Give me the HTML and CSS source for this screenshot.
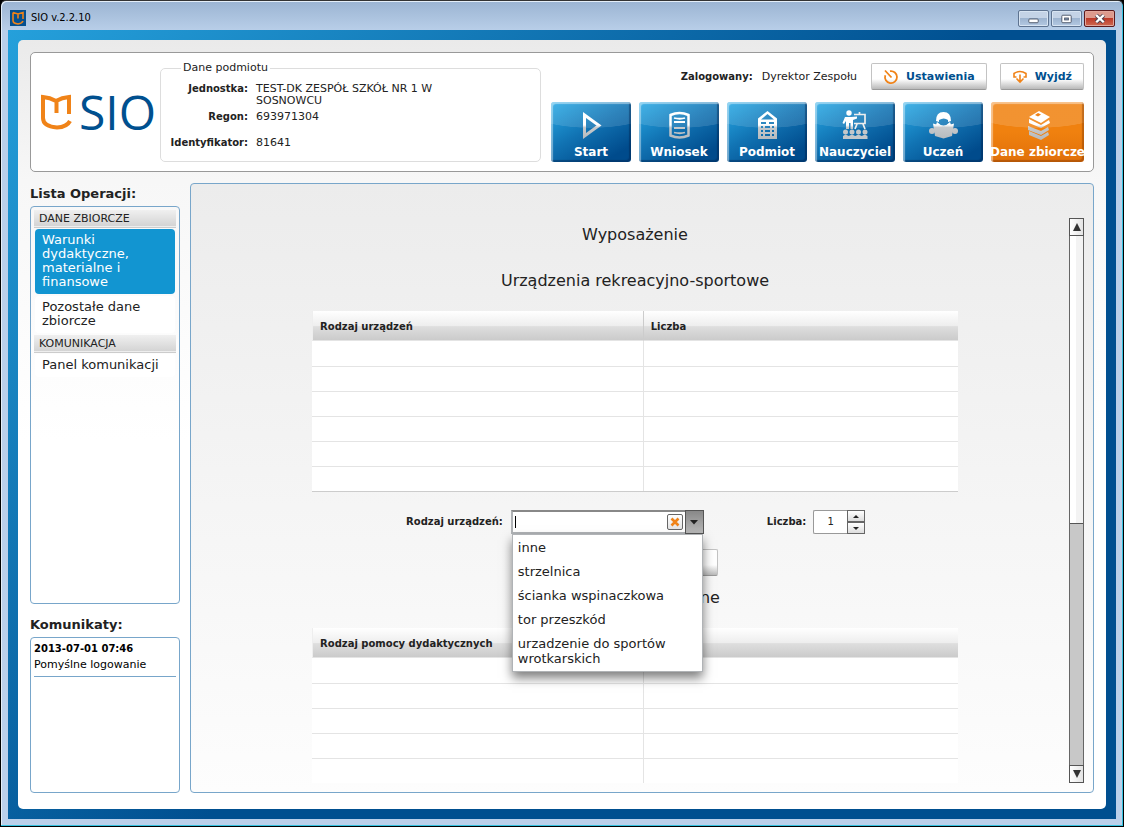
FILE: index.html
```html
<!DOCTYPE html>
<html lang="pl">
<head>
<meta charset="utf-8">
<title>SIO v.2.2.10</title>
<link rel="stylesheet" href="styles.css">
</head>
<body>
<div class="window">
  <header class="titlebar">
    <svg class="app-icon" viewBox="0 0 16 16" aria-hidden="true"><rect width="16" height="16" fill="#05508f"/><path d="M3 2.500v8q0 3 5 3.500 4-.5 5-3M3 2.500l5 1.500 5-1.500v6.500M8 4v4.500" fill="none" stroke="#f08318" stroke-width="1.600"/></svg>
    <span class="app-title">SIO v.2.2.10</span>
    <div class="window-controls">
      <button class="win-btn" aria-label="Minimalizuj"><svg viewBox="0 0 29 16"><rect x="9.500" y="8.500" width="10" height="4" rx="1" fill="#fff" stroke="#4a5468"/></svg></button>
      <button class="win-btn" aria-label="Maksymalizuj"><svg viewBox="0 0 29 16"><rect x="9.500" y="4.500" width="10" height="8" rx="1" fill="#fff" stroke="#4a5468"/><rect x="12.500" y="7.500" width="4" height="2" fill="#8fa6c2" stroke="#4a5468"/></svg></button>
      <button class="win-btn win-close" aria-label="Zamknij"><svg viewBox="0 0 29 16"><path d="M11 4.500l8 7.500M19 4.500l-8 7.500" stroke="#4d4250" stroke-width="4.500"/><path d="M11 4.500l8 7.500M19 4.500l-8 7.500" stroke="#fff" stroke-width="2.500"/></svg></button>
    </div>
  </header>
  <div class="frame">
    <div class="page">
      <section class="card">
        <div class="logo">
          <svg viewBox="0 0 32 36" aria-hidden="true"><path d="M30 27q-3 6-13 6.500Q3 32.500 3 24V3q7 .500 13 4 6-3.500 13-4v17M16.500 7v12" fill="none" stroke="#f08318" stroke-width="4"/></svg>
          <span>SIO</span>
        </div>
        <fieldset class="entity">
          <legend>Dane podmiotu</legend>
          <dl>
            <dt>Jednostka:</dt><dd>TEST-DK ZESPÓŁ SZKÓŁ NR 1 W SOSNOWCU</dd>
            <dt>Regon:</dt><dd class="spaced">693971304</dd>
            <dt>Identyfikator:</dt><dd>81641</dd>
          </dl>
        </fieldset>
        <div class="card-right">
          <div class="user">
            <b>Zalogowany:</b><span>Dyrektor Zespołu</span>
            <button class="tool"><svg viewBox="0 0 16 16" aria-hidden="true"><path d="M7 2.200a6 6 0 1 1-4.700 4M2 1.500l6.500 7" fill="none" stroke="#f08318" stroke-width="1.800"/></svg>Ustawienia</button>
            <button class="tool"><svg viewBox="0 0 16 16" aria-hidden="true"><path d="M4.500 8H2V4.500q6-4 12 0V8h-2.500M8 5.500v7.500M4.500 9.500L8 13l3.500-3.500" fill="none" stroke="#f08318" stroke-width="1.600"/></svg>Wyjdź</button>
          </div>
          <nav class="nav">
            <button class="nav-btn"><svg viewBox="0 0 32 32" aria-hidden="true"><path d="M9.500 6v21L24 16.500z" fill="none" stroke="url(#ink)" stroke-width="3"/></svg><span>Start</span></button>
            <button class="nav-btn"><svg viewBox="0 0 32 32" aria-hidden="true"><path d="M7.500 6q9-4 18 0v20.500q-9 4-18 0z" fill="none" stroke="url(#ink)" stroke-width="2.500"/><path d="M11 9q6 1.500 11 0M11 13h11M11 19h11M11 23.500q6 1.500 11 0" fill="none" stroke="url(#ink)" stroke-width="1.800"/></svg><span>Wniosek</span></button>
            <button class="nav-btn"><svg viewBox="0 0 32 32" aria-hidden="true"><path fill="url(#ink)" fill-rule="evenodd" d="M7 9.500L16.500 2 26 9.500V30H7zM10 10.500h13L16.500 5zM10 13h5v2h-5zM18 13h5v2h-5zM10 17h2v2h-2zM14 17h5v2h-5zM21 17h2v2h-2zM10 21h2v2h-2zM14 21h5v2h-5zM21 21h2v2h-2zM10 25h2v2h-2zM14 25h5v2h-5zM21 25h2v2h-2z"/></svg><span>Podmiot</span></button>
            <button class="nav-btn"><svg viewBox="0 0 32 32" aria-hidden="true"><g fill="url(#ink)"><circle cx="10" cy="4" r="2.700"/><path d="M6 8h6l6-.500v2L14 11v9h-2.500v-6H10v6H7v-8l-2 3-1.500-1z"/></g><path d="M15 5.500h11v9H15M20.500 5V3M18 15l-2 5M24 15l2 5" fill="none" stroke="#eee" stroke-width="1.700"/><g fill="#c3c7ca"><circle cx="6.500" cy="23" r="2.500"/><circle cx="13" cy="23" r="2.500"/><circle cx="19.500" cy="23" r="2.500"/><circle cx="26" cy="23" r="2.500"/><path d="M4 30v-3l2.500-1.500L9.700 27l3.300-1.500 3.200 1.500 3.300-1.500 3.200 1.500 3.300-1.500 2.500 1.500v3z"/></g></svg><span>Nauczyciel</span></button>
            <button class="nav-btn"><svg viewBox="0 0 32 32" aria-hidden="true"><g fill="url(#ink)"><path d="M9 12q0-9 7.500-9T24 12l-3 1v-2q-4-3-9 0v2z"/><path d="M10 13q6.500 7 13 0l1 3-7.500 2-7.500-2z"/><circle cx="5" cy="22" r="3"/><circle cx="28" cy="22" r="3"/><path d="M6 14.500l10.500 3L27 14.500l-2 12.500-8.500 2.500L8 27z"/></g></svg><span>Uczeń</span></button>
            <button class="nav-btn nav-active"><svg viewBox="0 0 32 32" aria-hidden="true"><g fill="url(#ink)"><path d="M7 8l10-6 11 6-9 6z"/><path d="M7 10l12 6 8-5 1 3-9 5-12-5z"/><path d="M6 17l13 5 7-4 1 3-8 5-13-5z"/><path d="M7 22l12 5 7-4 1 3-8 5-12-5z"/></g><path d="M13 6l3-2 3 1.500-3 2z" fill="#f08318"/></svg><span>Dane zbiorcze</span></button>
          </nav>
        </div>
      </section>
      <div class="columns">
        <aside class="sidebar">
          <h2>Lista Operacji:</h2>
          <nav class="box operations">
            <h3>DANE ZBIORCZE</h3>
            <a class="op op-selected" href="#">Warunki dydaktyczne, materialne i finansowe</a>
            <a class="op" href="#">Pozostałe dane zbiorcze</a>
            <h3>KOMUNIKACJA</h3>
            <a class="op" href="#">Panel komunikacji</a>
          </nav>
          <h2>Komunikaty:</h2>
          <div class="box messages">
            <p class="message"><b>2013-07-01 07:46</b>Pomyślne logowanie</p>
          </div>
        </aside>
        <main class="main">
          <div class="content">
            <h1>Wyposażenie</h1>
            <h1>Urządzenia rekreacyjno-sportowe</h1>
            <table class="grid">
              <thead><tr><th class="col-kind">Rodzaj urządzeń</th><th>Liczba</th></tr></thead>
              <tbody>
                <tr><td></td><td></td></tr><tr><td></td><td></td></tr><tr><td></td><td></td></tr>
                <tr><td></td><td></td></tr><tr><td></td><td></td></tr><tr><td></td><td></td></tr>
              </tbody>
            </table>
            <form class="form">
              <label for="kind">Rodzaj urządzeń:</label>
              <div class="combo">
                <input id="kind" type="text" autocomplete="off">
                <button type="button" class="clear" aria-label="Wyczyść"><svg viewBox="0 0 10 10"><path d="M1.500 1.500l7 7M8.500 1.500l-7 7" stroke="#f08318" stroke-width="2.600"/></svg></button>
                <button type="button" class="arrow" aria-label="Rozwiń"><svg viewBox="0 0 8 5"><path d="M0 0h8L4 4.500z" fill="#222"/></svg></button>
                <ul class="options" role="listbox">
                  <li role="option">inne</li>
                  <li role="option">strzelnica</li>
                  <li role="option">ścianka wspinaczkowa</li>
                  <li role="option">tor przeszkód</li>
                  <li role="option">urzadzenie do sportów wrotkarskich</li>
                </ul>
              </div>
              <label class="count-label" for="count">Liczba:</label>
              <div class="spinner">
                <input id="count" type="text" value="1">
                <div class="steps">
                  <button type="button" aria-label="Więcej"><svg viewBox="0 0 6 3"><path d="M0 3h6L3 0z" fill="#222"/></svg></button>
                  <button type="button" aria-label="Mniej"><svg viewBox="0 0 6 3"><path d="M0 0h6L3 3z" fill="#222"/></svg></button>
                </div>
              </div>
            </form>
            <button class="tool add" aria-label="Dodaj"></button>
            <h1>Pomoce dydaktyczne</h1>
            <table class="grid">
              <thead><tr><th class="col-kind">Rodzaj pomocy dydaktycznych</th><th></th></tr></thead>
              <tbody>
                <tr><td></td><td></td></tr><tr><td></td><td></td></tr><tr><td></td><td></td></tr>
                <tr><td></td><td></td></tr><tr><td></td><td></td></tr><tr><td></td><td></td></tr>
              </tbody>
            </table>
          </div>
          <div class="scrollbar">
            <button aria-label="Przewiń w górę"><svg viewBox="0 0 8 8"><path d="M0 8h8L4 0z" fill="#333"/></svg></button>
            <div class="track"><div class="thumb"></div></div>
            <button aria-label="Przewiń w dół"><svg viewBox="0 0 8 8"><path d="M0 0h8L4 8z" fill="#333"/></svg></button>
          </div>
        </main>
      </div>
    </div>
  </div>
</div>
<svg class="defs" aria-hidden="true"><defs><linearGradient id="ink" gradientUnits="userSpaceOnUse" x1="0" y1="0" x2="0" y2="32"><stop offset=".5" stop-color="#fff"/><stop offset=".58" stop-color="#c6c9cc"/><stop offset="1" stop-color="#b4b8bb"/></linearGradient></defs></svg>
</body>
</html>
```
FILE: styles.css
```css
* { box-sizing: border-box; }
body {
  margin: 0;
  color: #222;
  background: #000;
  font: 11px/12px "DejaVu Sans", Verdana, sans-serif;
}
button, input { font: inherit; color: inherit; margin: 0; padding: 0; }
h1, h2, h3, p, dl, dd, ul { margin: 0; padding: 0; }
svg { display: block; }
.defs { position: absolute; width: 0; height: 0; }

.window {
  display: flex;
  flex-direction: column;
  height: 100vh;
  padding: 0 7px 7px;
  border: 1px solid #000;
  border-top-color: #333;
  border-radius: 6px 6px 0 0;
  background: linear-gradient(#9bb4d2, #b9cfe9 30px, #bbd0ea);
  box-shadow: inset -1px -1px 0 #35c2e0, inset 1px 1px 0 #e4eef8;
}
.titlebar {
  display: flex;
  align-items: center;
  height: 29px;
  padding: 5px 1px 0 2px;
}
.app-icon { width: 16px; height: 16px; }
.app-title {
  flex: 1;
  margin-left: 5px;
  color: #000;
  font: 11px/16px "DejaVu Sans Condensed", Tahoma, sans-serif;
}
.window-controls { display: flex; gap: 2px; }
.win-btn {
  width: 31px;
  height: 17px;
  border: 1px solid #5e7390;
  border-radius: 2px;
  background: linear-gradient(#c4d3e6 45%, #9db4d0 50%, #b4c9e2);
  box-shadow: inset 0 0 0 1px #d7e4f2;
}
.win-btn svg { width: 29px; height: 15px; }
.win-close {
  border-color: #5c1a1d;
  background: linear-gradient(#dd9a8d 45%, #bd3a29 50%, #cf6a52);
  box-shadow: inset 0 0 0 1px #e2a79c;
}

.frame {
  flex: 1;
  display: flex;
  min-height: 0;
  padding: 10px;
  background: linear-gradient(135deg, #25a0db, #004f90 52%);
}
.page {
  flex: 1;
  display: flex;
  flex-direction: column;
  gap: 11px;
  min-width: 0;
  padding: 12px 12px 16px;
  border-radius: 5px;
  background: linear-gradient(#eaeaea, #f7f7f7 140px, #fff 400px);
}

.card {
  display: flex;
  height: 120px;
  padding: 8px 9px;
  border: 1px solid #999;
  border-radius: 5px;
  background: #fff;
}
.logo {
  display: flex;
  align-items: center;
  gap: 7px;
  width: 120px;
}
.logo svg { width: 32px; height: 36px; }
.logo span { color: #00508f; font: 500 48px/52px "Open Sans", sans-serif; }
.entity {
  width: 381px;
  height: 101px;
  margin: 0;
  padding: 0 5px;
  border: 1px solid #ddd;
  border-radius: 5px;
}
.entity legend { margin-left: 15px; padding: 0 2px; line-height: 14px; }
.entity dl {
  display: grid;
  grid-template-columns: 82px 200px;
  column-gap: 8px;
  row-gap: 4px;
  padding-top: 8px;
}
.entity dt { font-size: 10px; font-weight: bold; text-align: right; white-space: nowrap; }
.entity .spaced { padding-bottom: 10px; }
.card-right {
  flex: 1;
  display: flex;
  flex-direction: column;
  align-items: flex-end;
  gap: 12px;
  padding-top: 2px;
}
.user { display: flex; align-items: center; }
.user b { font-size: 10px; }
.user span { margin: 0 14px 0 9px; }
.tool {
  display: flex;
  align-items: center;
  justify-content: center;
  gap: 7px;
  height: 27px;
  padding: 0 11px;
  border: 1px solid #c3c3c3;
  border-bottom-color: #999;
  border-radius: 2px;
  background: linear-gradient(#fff 60%, #b9b9b9);
  color: #00508f;
  font-weight: bold;
}
.tool + .tool { margin-left: 13px; }
.tool svg { width: 16px; height: 16px; }
.nav { display: flex; gap: 8px; }
.nav-btn {
  display: flex;
  flex-direction: column;
  align-items: center;
  justify-content: space-between;
  width: 80px;
  height: 60px;
  padding: 7px 0 3px;
  border: 0;
  border-radius: 3px;
  background:
    radial-gradient(ellipse 75px 26px at 50% 0, rgba(255,255,255,.12) 98%, transparent),
    linear-gradient(150deg, #27aae6, #1173b3 45%, #004b8c 85%);
  box-shadow: inset 2px 2px 1px rgba(255,255,255,.45), inset -2px -2px 1px rgba(0,30,70,.4);
  color: #fff;
  font-size: 12px;
  font-weight: bold;
  line-height: 14px;
  white-space: nowrap;
}
.nav-btn svg { width: 32px; height: 32px; }
.nav-active {
  width: 93px;
  background:
    radial-gradient(ellipse 80px 26px at 50% 0, rgba(255,255,255,.14) 98%, transparent),
    linear-gradient(#f0810f 50%, #e0700a);
  box-shadow: inset 2px 2px 1px rgba(255,255,255,.45), inset -2px -2px 1px rgba(120,50,0,.4);
}

.columns { flex: 1; display: flex; gap: 10px; min-height: 0; }
.sidebar { display: flex; flex-direction: column; width: 150px; }
.sidebar h2 { padding: 2px 0 4px; font-size: 13px; line-height: 17px; }
.box { border: 1px solid #78a6ca; border-radius: 4px; padding: 3px; }
.operations { flex: 1; margin-bottom: 10px; }
.operations h3 {
  height: 18px;
  padding-left: 5px;
  border-bottom: 1px solid #ccc;
  background: linear-gradient(#f0f0f0, #d2d2d2);
  box-shadow: inset 0 -1px 0 #eee;
  font-size: 11px;
  font-weight: normal;
  line-height: 17px;
}
.op {
  display: block;
  margin: 1px 1px 2px;
  padding: 4px 7px 5px;
  border-radius: 4px;
  background: #fff;
  color: #222;
  font-size: 13px;
  line-height: 14px;
  text-decoration: none;
}
.op-selected { background: #1295d1; color: #fff; }
.messages { height: 156px; background: #fff; }
.message { padding-bottom: 3px; border-bottom: 1px solid #78a6ca; color: #000; line-height: 16px; }
.message b { display: block; font-size: 10px; }

.main {
  flex: 1;
  display: flex;
  min-width: 0;
  padding: 34px 9px 9px 10px;
  border: 1px solid #78a6ca;
  border-radius: 4px;
  background: linear-gradient(#ececec, #fdfdfd);
}
.content {
  flex: 1;
  display: flex;
  flex-direction: column;
  align-items: center;
  padding-top: 1px;
  overflow: hidden;
}
.content h1 { margin: 6px 0 20px; font-size: 16px; font-weight: normal; line-height: 20px; }
.grid {
  flex: none;
  width: 74.400%;
  border-collapse: separate;
  border-spacing: 0;
  table-layout: fixed;
  border-bottom: 1px solid #ccc;
  background: #fff;
}
.grid th {
  height: 30px;
  padding: 2px 7px 0;
  border-left: 1px solid #ccc;
  border-bottom: 1px solid #e4e4e4;
  background: linear-gradient(#fff, #eee 50%, #dedede 54%, #cbcbcb);
  font-size: 10px;
  text-align: left;
}
.grid th:first-child { border-left-color: #eee; }
.grid .col-kind { width: 51.200%; }
.grid td { height: 25px; padding: 0; border-left: 1px solid #e4e4e4; border-top: 1px solid #e4e4e4; }
.grid td:first-child { border-left: 0; }
.grid tbody tr:first-child td { border-top: 0; }

.form {
  display: flex;
  align-items: center;
  width: 74.400%;
  padding: 18px 0 15px 94px;
}
.form label { font-size: 10px; font-weight: bold; }
.combo {
  position: relative;
  display: flex;
  align-items: center;
  width: 193px;
  height: 24px;
  margin-left: 8px;
  border: 2px solid #b0b3b6;
  border-top-color: #888;
  border-right: 0;
  background: #fff;
}
.combo input {
  flex: 1;
  min-width: 0;
  height: 18px;
  padding-left: 2px;
  border: 0;
  outline: 0;
  background: linear-gradient(#000, #000) 2px 50% / 1px 12px no-repeat;
  font-size: 12px;
}
.clear {
  display: flex;
  align-items: center;
  justify-content: center;
  width: 16px;
  height: 16px;
  border: 1px solid #666;
  border-radius: 2px;
  background: linear-gradient(#fff, #e4e4e4);
}
.clear svg { width: 10px; height: 10px; }
.arrow {
  display: flex;
  align-items: center;
  justify-content: center;
  align-self: stretch;
  width: 19px;
  margin: -2px 0 -2px 2px;
  border: 1px solid #555;
  background: linear-gradient(#888, #b8b8b8);
}
.arrow svg { width: 8px; height: 5px; }
.options {
  position: absolute;
  z-index: 2;
  top: 22px;
  left: -1px;
  right: 1px;
  padding: 1px 4px 0;
  border: 1px solid #b0b3b6;
  background: #fff;
  box-shadow: 0 6px 10px rgba(0,0,0,.5);
  list-style: none;
  font-size: 13px;
  line-height: 15px;
}
.options li { padding: 4px 0 5px 1px; }
.form .count-label { margin-left: 63px; }
.spinner { display: flex; width: 52px; height: 24px; margin-left: 7px; }
.spinner input { width: 34px; border: 1px solid #999; border-right: 0; border-radius: 2px 0 0 2px; font-size: 10px; text-align: center; }
.steps { display: flex; flex: 1; flex-direction: column; }
.steps button {
  display: flex;
  flex: 1;
  align-items: center;
  justify-content: center;
  border: 1px solid #666;
  background: linear-gradient(#fff, #ddd);
}
.steps svg { width: 6px; height: 3px; }
.add { flex: none; width: 166px; }
.add + h1 { margin: 12px 0 20px; }

.scrollbar { display: flex; flex-direction: column; width: 15px; }
.scrollbar button {
  display: flex;
  align-items: center;
  justify-content: center;
  height: 18px;
  border: 1px solid #555;
  background: linear-gradient(90deg, #fff, #e4e4e4);
}
.scrollbar svg { width: 8px; height: 8px; }
.track { flex: 1; border: solid #666; border-width: 0 1px; background: #c8c8c8; }
.thumb { height: 54.500%; border-bottom: 1px solid #555; background: linear-gradient(90deg, #fff 50%, #f3f3f3 50%); }
```
